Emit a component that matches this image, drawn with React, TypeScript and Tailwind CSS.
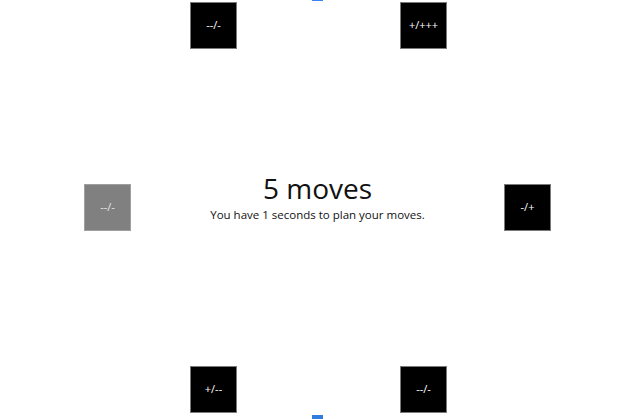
import React from "react";

function Tile({ label, gray }: { label: string; gray?: boolean }) {
  return (
    <div
      className={
        gray
          ? "w-[47px] h-[47px] bg-[#808080] border border-[#a0a0a0] flex items-center justify-center text-[11px] text-[#e6e6e6] shrink-0"
          : "w-[47px] h-[47px] bg-black border border-[#7a7a7a] flex items-center justify-center text-[11px] text-white shrink-0"
      }
    >
      {label}
    </div>
  );
}

export default function App() {
  return (
    <div
      className="relative w-[620px] h-[419px] bg-white overflow-hidden flex flex-col"
      style={{ fontFamily: '"Open Sans", sans-serif' }}
    >
      <div className="absolute left-[312px] top-0 w-[11px] h-[1px] bg-[#3b82f6]" />
      <div className="absolute left-[312px] top-[415px] w-[11px] h-[4px] bg-[#2f7de1]" />

      <div className="flex pt-[2px] pl-[190px] gap-[163px]">
        <Tile label="--/-" />
        <Tile label="+/+++" />
      </div>

      <div className="flex items-start h-[47px] mt-[135px] pl-[84px] pr-[69px]">
        <Tile label="--/-" gray />
        <div className="flex-1 flex flex-col items-center gap-[2px] text-[#111] -mt-[13px]">
          <div className="text-[28px] leading-[34px]">5 moves</div>
          <div className="text-[11.5px] leading-[16px]">You have 1 seconds to plan your moves.</div>
        </div>
        <Tile label="-/+" />
      </div>

      <div className="flex mt-[135px] pl-[190px] gap-[163px]">
        <Tile label="+/--" />
        <Tile label="--/-" />
      </div>
    </div>
  );
}
